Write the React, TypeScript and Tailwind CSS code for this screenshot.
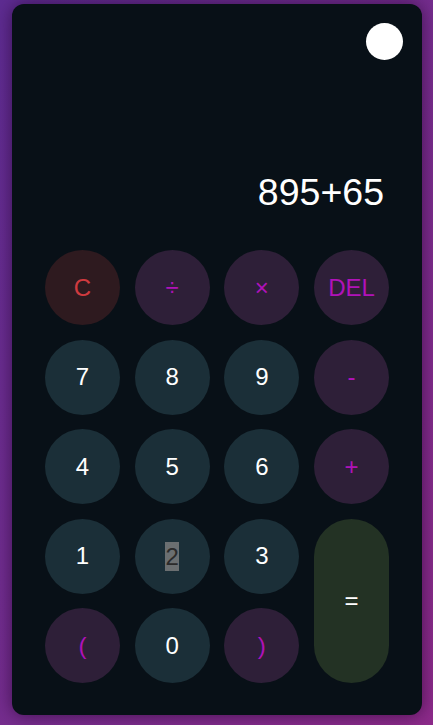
const keys = [
  { label: 'C', kind: 'clear' },
  { label: '÷', kind: 'op' },
  { label: '×', kind: 'op' },
  { label: 'DEL', kind: 'op' },
  { label: '7', kind: 'num' },
  { label: '8', kind: 'num' },
  { label: '9', kind: 'num' },
  { label: '-', kind: 'op' },
  { label: '4', kind: 'num' },
  { label: '5', kind: 'num' },
  { label: '6', kind: 'num' },
  { label: '+', kind: 'op' },
  { label: '1', kind: 'num' },
  { label: '2', kind: 'selected' },
  { label: '3', kind: 'num' },
];

const styles: Record<string, string> = {
  clear: 'bg-[#2e1a1f] text-[#d03a3f]',
  op: 'bg-[#2e1f38] text-[#b012b8]',
  num: 'bg-[#1b2f38] text-white',
  selected: 'bg-[#1b2f38] text-[#2b2b2b]',
};

const App = () => {
  return (
    <div
      className="w-[433px] h-[725px] bg-gradient-to-br from-[#5e2c92] to-[#8d2a8a] pl-[12px] pr-[11px] pt-[4px] pb-[10px]"
      style={{ fontFamily: '"Liberation Sans", Arial, sans-serif' }}
    >
      <div className="h-full w-full rounded-[12px] bg-[#081017] shadow-[0_0_18px_rgba(30,0,40,0.6)] flex flex-col">
        {/* Theme toggle */}
        <div className="flex justify-end pt-[19px] pr-[19px]">
          <div className="w-[37px] h-[37px] rounded-full bg-white" />
        </div>

        {/* Display */}
        <div className="mt-[110px] pr-[38px] text-right text-white text-[37.5px] leading-[45px]">
          895+65
        </div>

        {/* Keypad */}
        <div className="mt-[35px] px-[33px] grid grid-cols-4 gap-x-[14.67px] gap-y-[14.5px]">
          {keys.map((k, i) => (
            <button
              key={i}
              className={`h-[75px] w-[75px] rounded-full flex items-center justify-center text-[24px] ${styles[k.kind]}`}
            >
              {k.kind === 'selected' ? (
                <span className="bg-[#6b6f71] leading-[29px]">{k.label}</span>
              ) : (
                k.label
              )}
            </button>
          ))}
          <button className="col-start-4 row-start-4 row-span-2 w-[75px] rounded-full bg-[#233224] text-white text-[24px] flex items-center justify-center">
            =
          </button>
          <button className="h-[75px] w-[75px] rounded-full flex items-center justify-center text-[24px] bg-[#2e1f38] text-[#b012b8]">
            (
          </button>
          <button className="h-[75px] w-[75px] rounded-full flex items-center justify-center text-[24px] bg-[#1b2f38] text-white">
            0
          </button>
          <button className="h-[75px] w-[75px] rounded-full flex items-center justify-center text-[24px] bg-[#2e1f38] text-[#b012b8]">
            )
          </button>
        </div>
      </div>
    </div>
  );
};

export default App;
